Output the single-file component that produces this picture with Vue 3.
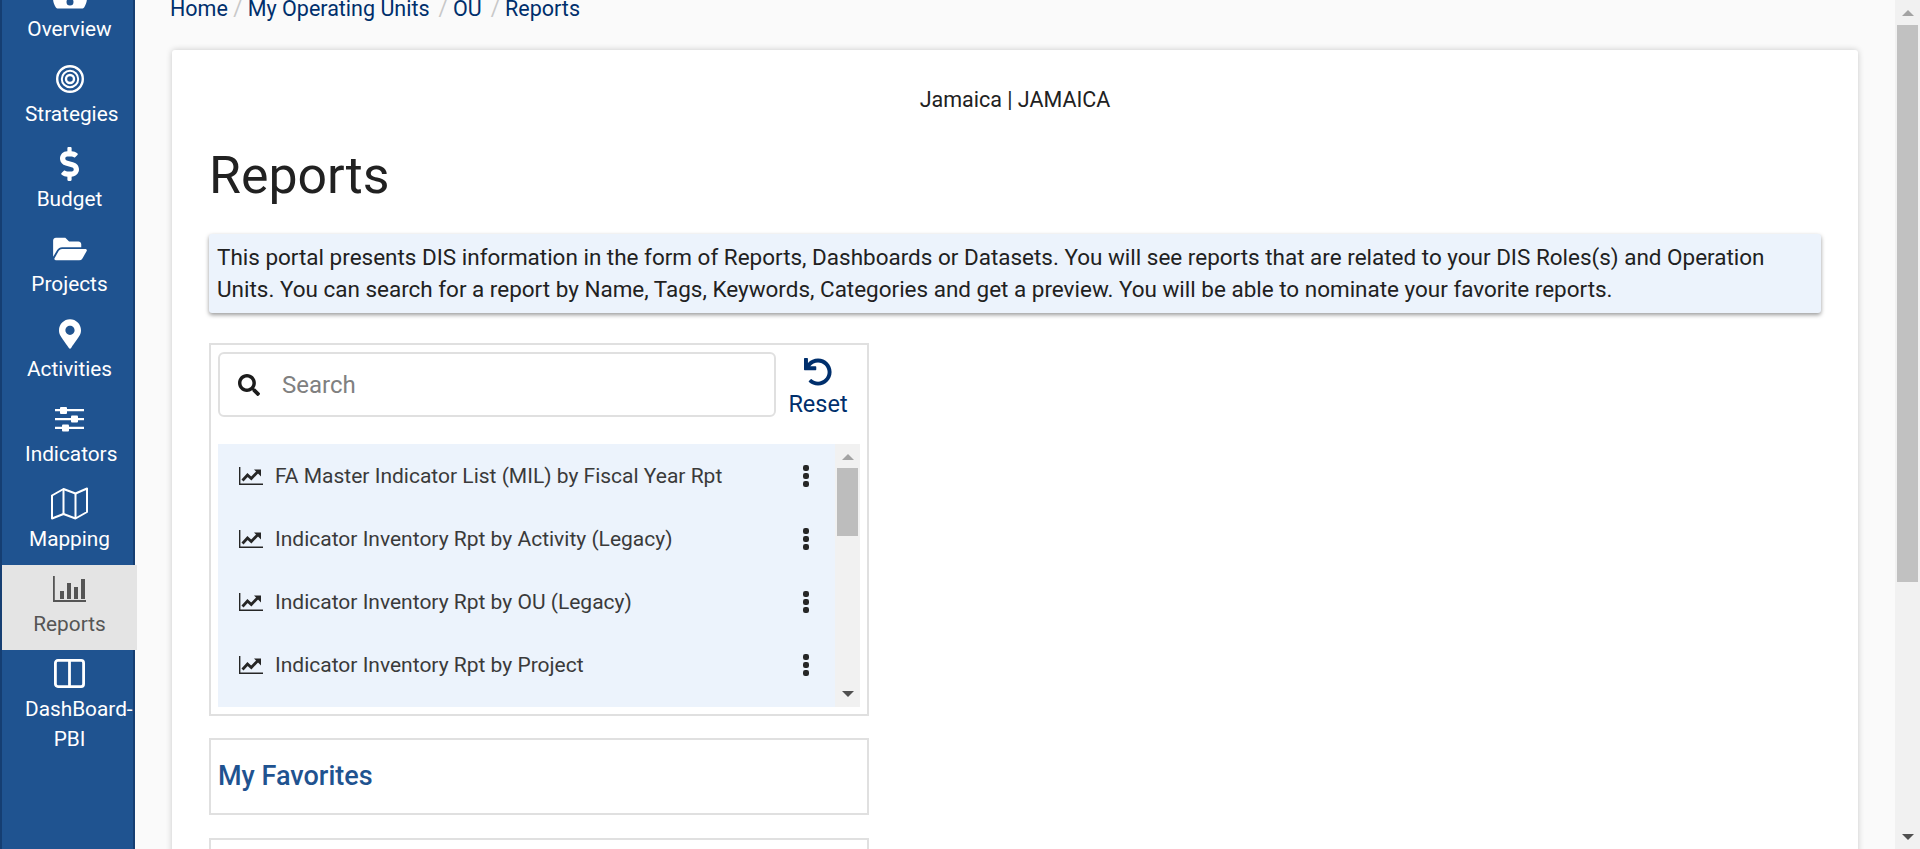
<script setup>
const navItems = [
  { label: 'Overview', icon: 'overview' },
  { label: 'Strategies', icon: 'target' },
  { label: 'Budget', icon: 'dollar' },
  { label: 'Projects', icon: 'folder' },
  { label: 'Activities', icon: 'marker' },
  { label: 'Indicators', icon: 'sliders' },
  { label: 'Mapping', icon: 'map' },
  { label: 'Reports', icon: 'bars', active: true },
  { label: 'DashBoard-PBI', icon: 'columns' }
]

const crumbs = ['Home', 'My Operating Units', 'OU', 'Reports']

const reports = [
  'FA Master Indicator List (MIL) by Fiscal Year Rpt',
  'Indicator Inventory Rpt by Activity (Legacy)',
  'Indicator Inventory Rpt by OU (Legacy)',
  'Indicator Inventory Rpt by Project'
]
</script>

<template>
  <div class="shell">
    <nav class="sidebar">
      <a
        v-for="item in navItems"
        :key="item.label"
        class="nav-item"
        :class="{ active: item.active }"
      >
        <span class="nav-icon">
          <svg v-if="item.icon === 'overview'" width="34" height="30" viewBox="0 -2 34 30">
            <path fill="currentColor" fill-rule="evenodd" d="M17 0C7.6 0 0 7.6 0 17c0 3.400 1 6.600 2.700 9.200.5.800 1.400 1.300 2.400 1.300h23.800c1 0 1.900-.5 2.400-1.300C32.900 23.600 34 20.400 34 17 34 7.600 26.400 0 17 0zm0 24.500a3.500 3.500 0 1 1 0-7 3.500 3.500 0 0 1 0 7z" />
          </svg>
          <svg v-else-if="item.icon === 'target'" width="28" height="28" viewBox="0 0 28 28" fill="none" stroke="currentColor">
            <circle cx="14" cy="14" r="12.8" stroke-width="2.400" />
            <circle cx="14" cy="14" r="8.200" stroke-width="2" />
            <circle cx="14" cy="14" r="4" stroke-width="2.400" />
          </svg>
          <svg v-else-if="item.icon === 'dollar'" width="19" height="34" viewBox="0 0 288 512">
            <path fill="currentColor" d="M209.200 233.400l-108-31.600C88.700 198.200 80 186.500 80 173.500c0-16.300 13.200-29.500 29.500-29.500h66.300c12.200 0 24.200 3.700 34.200 10.500 6.100 4.100 14.300 3.100 19.500-2l34.800-34c7.100-6.900 6.100-18.400-1.800-24.500C238 74.800 207.400 64.100 176 64V16c0-8.800-7.200-16-16-16h-32c-8.800 0-16 7.200-16 16v48h-2.500C45.800 64-5.400 118.700.5 183.600c4.200 46.100 39.400 83.600 83.800 96.600l102.500 30c12.500 3.700 21.200 15.300 21.200 28.300 0 16.300-13.200 29.500-29.500 29.500h-66.300C100 368 88 364.300 78 357.500c-6.100-4.100-14.300-3.100-19.500 2l-34.800 34c-7.100 6.900-6.100 18.400 1.800 24.500 24.500 19.200 55.100 29.900 86.500 30v48c0 8.800 7.200 16 16 16h32c8.800 0 16-7.200 16-16v-48.200c46.600-.9 90.300-28.600 105.700-72.700 21.500-61.600-14.600-124.800-72.500-141.700z" />
          </svg>
          <svg v-else-if="item.icon === 'folder'" width="34" height="30" viewBox="0 0 576 512">
            <path fill="currentColor" d="M572.694 292.093L500.270 416.248A63.997 63.997 0 0 1 444.989 448H45.025c-18.523 0-30.064-20.093-20.731-36.093l72.424-124.155A64 64 0 0 1 152 256h399.964c18.523 0 30.064 20.093 20.730 36.093zM152 224h328v-48c0-26.510-21.490-48-48-48H272l-64-64H48C21.490 64 0 85.490 0 112v278.046l69.077-118.418C86.214 242.250 117.989 224 152 224z" />
          </svg>
          <svg v-else-if="item.icon === 'marker'" width="22" height="30" viewBox="0 0 384 512">
            <path fill="currentColor" d="M172.268 501.670C26.970 291.031 0 269.413 0 192 0 85.961 85.961 0 192 0s192 85.961 192 192c0 77.413-26.970 99.031-172.268 309.670-9.535 13.774-29.930 13.773-39.464 0zM192 272c44.183 0 80-35.817 80-80s-35.817-80-80-80-80 35.817-80 80 35.817 80 80 80z" />
          </svg>
          <svg v-else-if="item.icon === 'sliders'" width="29" height="26" viewBox="0 0 29 26">
            <path fill="currentColor" d="M0 3h5v2.200H0zM11 3h18v2.200H11zM0 12h16v2.200H0zM22 12h7v2.200h-7zM0 20.800h7V23H0zM13 20.800h16V23H13z" />
            <rect x="5" y="1" width="7" height="7" rx="1" fill="currentColor" />
            <rect x="16" y="9.500" width="7" height="7" rx="1" fill="currentColor" />
            <rect x="7" y="18.500" width="7" height="7" rx="1" fill="currentColor" />
          </svg>
          <svg v-else-if="item.icon === 'map'" width="37" height="33" viewBox="0 0 37 33" fill="none" stroke="currentColor" stroke-width="2">
            <path d="M1 8.500 12.500 2l12 4.500L36 1.500v23.500l-11.500 6.500-12-4.500L1 31.500z" stroke-linejoin="round" />
            <path d="M12.500 2v25.500M24.500 6.500v25" />
          </svg>
          <svg v-else-if="item.icon === 'bars'" width="33" height="26" viewBox="0 0 33 26">
            <path fill="currentColor" d="M0 0h1.800v24H33v2H0zM7 15h4v8H7zM14 7h4v16h-4zM21 11h4v12h-4zM28 3h4v20h-4z" />
          </svg>
          <svg v-else width="31" height="29" viewBox="0 0 31 29" fill="none" stroke="currentColor" stroke-width="2.800">
            <rect x="1.400" y="1.400" width="28.200" height="26.200" rx="2.500" />
            <path d="M15.500 1.400v26.200" />
          </svg>
        </span>
        <span class="nav-label">{{ item.label }}</span>
      </a>
    </nav>

    <main class="content">
      <ol class="breadcrumb">
        <li v-for="(crumb, i) in crumbs" :key="crumb">
          <span v-if="i > 0" class="sep">/</span>{{ crumb }}
        </li>
      </ol>

      <section class="card">
        <p class="org">Jamaica | JAMAICA</p>
        <h1>Reports</h1>
        <div class="notice">
          This portal presents DIS information in the form of Reports, Dashboards or Datasets. You will see reports that are related to your DIS Roles(s) and Operation Units. You can search for a report by Name, Tags, Keywords, Categories and get a preview. You will be able to nominate your favorite reports.
        </div>

        <div class="panel search-panel">
          <div class="search-row">
            <label class="search-box">
              <svg width="22" height="22" viewBox="0 0 512 512">
                <path fill="#1c1c1c" d="M505 442.700L405.300 343c-4.500-4.500-10.600-7-17-7H372c27.600-35.300 44-79.700 44-128C416 93.100 322.900 0 208 0S0 93.100 0 208s93.100 208 208 208c48.300 0 92.700-16.400 128-44v16.300c0 6.400 2.500 12.500 7 17l99.700 99.700c9.400 9.400 24.600 9.400 33.900 0l28.300-28.300c9.400-9.400 9.400-24.600.1-34zM208 336c-70.700 0-128-57.200-128-128 0-70.700 57.200-128 128-128 70.700 0 128 57.200 128 128 0 70.700-57.200 128-128 128z" />
              </svg>
              <input type="text" placeholder="Search" />
            </label>
            <button class="reset" type="button">
              <svg width="28" height="28" viewBox="0 0 512 512">
                <path fill="currentColor" d="M212.333 224.333H12c-6.627 0-12-5.373-12-12V12C0 5.373 5.373 0 12 0h48c6.627 0 12 5.373 12 12v78.112C117.773 39.279 184.260 7.470 258.175 8.007c136.906.994 246.448 111.623 246.157 248.532C504.041 393.258 393.120 504 256.333 504c-64.089 0-122.496-24.313-166.510-64.215-5.099-4.622-5.334-12.554-.467-17.420l33.967-33.967c4.474-4.474 11.662-4.717 16.401-.525C170.760 415.336 211.580 432 256.333 432c97.268 0 176-78.716 176-176 0-97.267-78.716-176-176-176-58.496 0-110.280 28.476-142.274 72.333h98.274c6.627 0 12 5.373 12 12v48c0 6.627-5.373 12-12 12z" />
              </svg>
              <span>Reset</span>
            </button>
          </div>

          <div class="list-wrap">
            <ul class="report-list">
              <li v-for="name in reports" :key="name">
                <svg class="chart" width="24" height="18" viewBox="0 0 24 18" fill="none" stroke="currentColor">
                  <path d="M.7 0v17.200H24" stroke-width="1.400" />
                  <path d="M3.500 13.500 8.500 8l3.800 3.500L19 4.500" stroke-width="2.800" />
                  <path d="M15 2.500h7v7z" fill="currentColor" stroke="none" />
                </svg>
                <span class="report-name">{{ name }}</span>
                <svg class="dots" width="8" height="22" viewBox="0 0 8 22">
                  <rect x="1" y="0" width="6" height="6" rx="2.200" fill="currentColor" />
                  <rect x="1" y="8" width="6" height="6" rx="2.200" fill="currentColor" />
                  <rect x="1" y="16" width="6" height="6" rx="2.200" fill="currentColor" />
                </svg>
              </li>
            </ul>
            <div class="list-scroll">
              <i class="arrow up light"></i>
              <i class="list-thumb"></i>
              <i class="arrow down"></i>
            </div>
          </div>
        </div>

        <div class="panel favorites">
          <h2>My Favorites</h2>
        </div>
        <div class="panel next"></div>
      </section>
    </main>

    <div class="page-scroll">
      <i class="arrow up big light"></i>
      <i class="page-thumb"></i>
      <i class="arrow down big"></i>
    </div>
  </div>
</template>

<style>
html,
body {
  margin: 0;
  overflow: hidden;
}
</style>

<style scoped>
.shell {
  display: flex;
  height: 849px;
  overflow: hidden;
  background: #fafafa;
  font-family: Roboto, "Liberation Sans", sans-serif;
  color: #212121;
}

/* side nav, page is scrolled so the first item is cut off */
.sidebar {
  flex: 0 0 135px;
  min-width: 0;
  box-sizing: border-box;
  height: 879px;
  margin-top: -30px;
  background: #1f5390;
  border-left: 2px solid #153e72;
  border-right: 2px solid #153e72;
}
.nav-item {
  display: block;
  box-sizing: border-box;
  width: 135px;
  height: 85px;
  padding: 5px 23px 0;
  color: #fff;
  text-align: center;
  font-size: 20.800px;
  line-height: 30px;
}
.nav-item.active {
  position: relative;
  background: #e4e4e4;
  color: #555;
}
.nav-icon {
  display: flex;
  height: 37px;
  justify-content: center;
  align-items: center;
}
.nav-label {
  display: block;
  margin-top: 2px;
}

.content {
  flex: 1;
  min-width: 0;
  padding: 0 37px;
}
.breadcrumb {
  display: flex;
  height: 50px;
  margin: -5px 0 5px -2px;
  padding: 0;
  list-style: none;
  font-size: 21.500px;
  line-height: 28px;
  color: #002f6c;
}
.sep {
  margin: 0 5.500px;
  color: #c8c8c8;
}
.breadcrumb li:nth-child(n + 3) {
  margin-left: 3.500px;
}

.card {
  height: 900px;
  box-sizing: border-box;
  padding: 37px 37px 0;
  background: #fff;
  border-radius: 3px;
  box-shadow: 0 0 6px rgba(0, 0, 0, 0.2);
}
.org {
  margin: 0;
  text-align: center;
  font-size: 21.500px;
  line-height: 26px;
}
h1 {
  margin: 34px 0 29px;
  font-size: 51.800px;
  font-weight: 400;
  line-height: 58px;
}
.notice {
  box-sizing: border-box;
  height: 79px;
  padding: 7px 8px;
  background: #ecf3fc;
  border-radius: 3px;
  font-size: 22.480px;
  line-height: 32px;
  box-shadow: 0 2px 4px rgba(0, 0, 0, 0.4);
}

.panel {
  box-sizing: border-box;
  width: 660px;
  border: 2px solid #e0e0e0;
}
.search-panel {
  height: 373px;
  margin-top: 30px;
  padding: 7px;
}
.search-row {
  display: flex;
  height: 65px;
}
.search-box {
  display: flex;
  box-sizing: border-box;
  width: 558px;
  align-items: center;
  padding-left: 18px;
  border: 2px solid #e0e0e0;
  border-radius: 6px;
}
.search-box input {
  flex: 1;
  min-width: 0;
  margin-left: 20px;
  border: 0;
  outline: 0;
  background: none;
  font: inherit;
  font-size: 24px;
}
.search-box input::placeholder {
  color: #808080;
}
.reset {
  display: flex;
  flex: 1;
  flex-direction: column;
  align-items: center;
  padding: 6px 0 0;
  border: 0;
  background: none;
  color: #002f6c;
  font: inherit;
  font-size: 23.500px;
  line-height: 36px;
}
.reset svg {
  flex: none;
}
.reset span {
  flex: none;
}

.list-wrap {
  display: flex;
  height: 263px;
  margin-top: 27px;
  background: #ecf3fc;
}
.report-list {
  flex: 1;
  min-width: 0;
  margin: 0;
  padding: 0 0 0 20px;
  list-style: none;
  color: #3a3a3a;
}
.report-list li {
  display: flex;
  height: 63px;
  align-items: center;
  font-size: 21px;
}
.chart {
  flex: none;
  margin-left: 1px;
  color: #262626;
}
.report-name {
  flex: 1;
  margin-left: 12px;
}
.dots {
  flex: none;
  margin-right: 25px;
  color: #262626;
}

.list-scroll {
  display: flex;
  flex: 0 0 25px;
  flex-direction: column;
  align-items: center;
  background: #f1f1f1;
}
.list-thumb {
  width: 21px;
  height: 68px;
  background: #bdbdbd;
}
.arrow {
  flex: none;
  width: 0;
  height: 0;
  margin: 10px 0 8px;
  border-left: 6px solid transparent;
  border-right: 6px solid transparent;
}
.arrow.up {
  border-bottom: 6px solid #505050;
}
.arrow.up.light {
  border-bottom-color: #a3a3a3;
}
.arrow.down {
  margin: auto 0 10px;
  border-top: 6px solid #505050;
}

.favorites {
  height: 77px;
  margin-top: 22px;
  padding: 0 7px;
}
.favorites h2 {
  margin: 0;
  color: #1f5390;
  font-size: 27px;
  font-weight: 500;
  line-height: 73px;
}
.next {
  height: 60px;
  margin-top: 23px;
}

/* stand-in for the browser's own scrollbar */
.page-scroll {
  display: flex;
  flex: 0 0 25px;
  flex-direction: column;
  align-items: center;
  background: #f1f1f1;
}
.page-thumb {
  width: 21px;
  height: 557px;
  background: #c1c1c1;
}
.arrow.big {
  margin-top: 10px;
  margin-bottom: 9px;
}
.arrow.down.big {
  margin: auto 0 9px;
}
</style>
